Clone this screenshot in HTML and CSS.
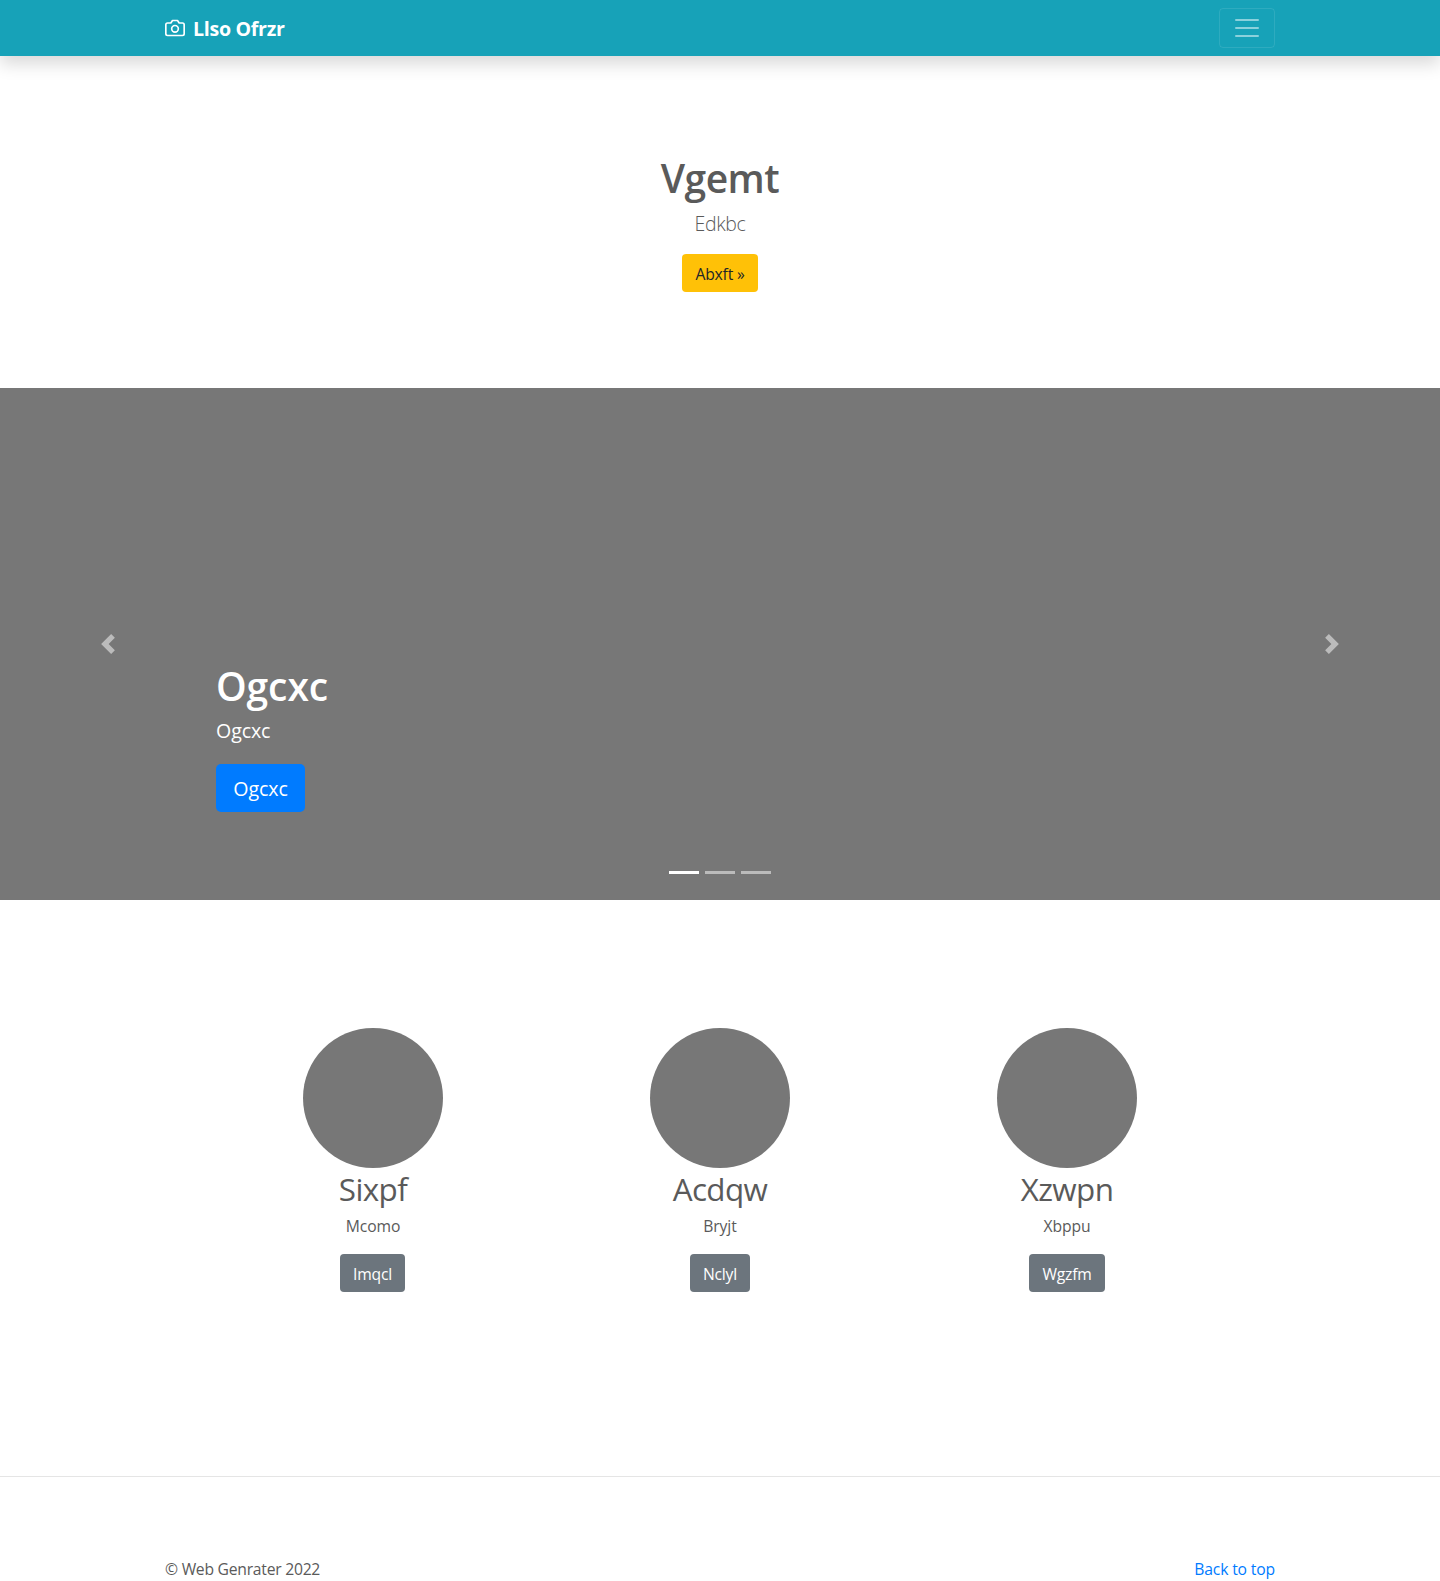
FILE: index.html
```html
<!DOCTYPE html>
<html lang="en">
<head>
<meta charset="utf-8">
<title>Llso Ofrzr</title>
<link rel="stylesheet" href="styles.css">
</head>
<body>
<header class="navbar">
  <div class="container">
    <a class="brand" href="#">
      <svg width="20" height="20" viewBox="0 0 24 24" fill="none" stroke="currentColor" stroke-width="2" stroke-linecap="round" stroke-linejoin="round"><path d="M23 19a2 2 0 0 1-2 2H3a2 2 0 0 1-2-2V8a2 2 0 0 1 2-2h4l2-3h6l2 3h4a2 2 0 0 1 2 2z"/><circle cx="12" cy="13" r="4"/></svg>
      <strong>Llso Ofrzr</strong>
    </a>
    <button class="toggler" type="button" aria-label="Toggle navigation">
      <svg width="30" height="30" viewBox="0 0 30 30" fill="none" stroke="rgba(255,255,255,.5)" stroke-width="2" stroke-linecap="round"><path d="M4 7h22M4 15h22M4 23h22"/></svg>
    </button>
  </div>
</header>
<main>
  <section class="hero">
    <h1>Vgemt</h1>
    <p>Edkbc</p>
    <a class="btn btn-warning" href="#">Abxft »</a>
  </section>
  <section class="carousel">
    <a class="control" href="#" aria-label="Previous"><svg width="20" height="20" viewBox="0 0 8 8" fill="#fff"><path d="M5.25 0l-4 4 4 4 1.5-1.5L4.25 4l2.5-2.5L5.25 0z"/></svg></a>
    <div class="slide">
      <div class="caption">
        <h1>Ogcxc</h1>
        <p>Ogcxc</p>
        <a class="btn btn-primary" href="#">Ogcxc</a>
      </div>
      <div class="indicators"><i class="active"></i><i></i><i></i></div>
    </div>
    <a class="control" href="#" aria-label="Next"><svg width="20" height="20" viewBox="0 0 8 8" fill="#fff"><path d="M2.75 0l-1.5 1.5L3.75 4l-2.5 2.5L2.75 8l4-4-4-4z"/></svg></a>
  </section>
  <section class="features">
    <div class="feature">
      <div class="avatar"></div>
      <h2>Sixpf</h2>
      <p>Mcomo</p>
      <a class="btn btn-secondary imqcl" href="#">Imqcl</a>
    </div>
    <div class="feature">
      <div class="avatar"></div>
      <h2>Acdqw</h2>
      <p>Bryjt</p>
      <a class="btn btn-secondary nclyl" href="#">Nclyl</a>
    </div>
    <div class="feature">
      <div class="avatar"></div>
      <h2>Xzwpn</h2>
      <p>Xbppu</p>
      <a class="btn btn-secondary wgzfm" href="#">Wgzfm</a>
    </div>
  </section>
</main>
<footer class="footer">
  <div class="container">
    <p class="copy">© Web Genrater 2022</p>
    <a class="top" href="#">Back to top</a>
  </div>
</footer>
</body>
</html>
```
FILE: styles.css
```css
* { box-sizing: border-box; }
body { margin: 0; font: 400 16px/24px "Segoe UI", "Open Sans", "Noto Sans", sans-serif; color: #5a5a5a; background: #fff; }
h1, h2, p { margin: 0; }
a { text-decoration: none; }
svg { display: block; }
.container { width: 1110px; margin: 0 auto; display: flex; justify-content: space-between; align-items: center; }

.navbar { position: relative; height: 56px; padding: 8px 0; background: #17a2b8; box-shadow: 0 8px 16px rgba(0,0,0,.15); }
.brand { display: flex; align-items: center; gap: 8px; color: #fff; font-size: 19.6px; line-height: 30px; }
.brand strong { padding-top: 2px; font-weight: 700; letter-spacing: -.3px; }
.toggler { width: 56px; height: 40px; padding: 0; display: flex; align-items: center; justify-content: center; background: none; border: 1px solid rgba(255,255,255,.1); border-radius: 4px; }

.hero { height: 332px; padding-top: 96px; display: flex; flex-direction: column; align-items: center; }
.hero h1, .caption h1 { font-size: 39px; line-height: 52px; font-weight: 600; letter-spacing: -.5px; }
.hero p { margin: 4px 0 14px; font-size: 19.5px; line-height: 32px; font-weight: 300; letter-spacing: -.35px; }

.btn { display: flex; align-items: center; justify-content: center; height: 38px; padding-top: 1px; border-radius: 4px; font-size: 15.7px; letter-spacing: -.2px; }
.btn-warning { width: 76px; background: #ffc107; color: #212529; }
.btn-primary { width: 89px; height: 48px; padding-top: 2px; border-radius: 5px; background: #007bff; color: #fff; font-size: 19.6px; letter-spacing: -.1px; }
.btn-secondary { background: #6c757d; color: #fff; }

.carousel { height: 512px; display: flex; background: #777; color: #fff; }
.control { width: 15%; display: flex; align-items: center; justify-content: center; opacity: .5; }
.slide { flex: 1; display: flex; flex-direction: column; justify-content: space-between; padding: 272px 0 26px; }
.caption h1 { letter-spacing: -.1px; }
.caption p { margin: 4px 0 18px; font-size: 19.6px; line-height: 30px; letter-spacing: -.1px; }
.indicators { display: flex; justify-content: center; gap: 6px; }
.indicators i { width: 30px; height: 3px; background: #fff; opacity: .5; }
.indicators .active { opacity: 1; }

.features { width: 1041px; height: 576px; margin: 0 auto; padding-top: 128px; display: grid; grid-template-columns: repeat(3, 1fr); }
.feature { display: flex; flex-direction: column; align-items: center; }
.avatar { width: 140px; height: 140px; border-radius: 50%; background: #777; }
.feature h2 { font-size: 31.4px; line-height: 42px; font-weight: 400; letter-spacing: -.6px; }
.feature p { margin: 4px 0 16px; font-size: 15.7px; letter-spacing: -.1px; }
.imqcl { width: 65px; margin-right: 1px; }
.nclyl { width: 60px; }
.wgzfm { width: 76px; }

.footer { height: 105px; padding-top: 80px; border-top: 1px solid #e5e5e5; }
.copy { font-size: 15.7px; letter-spacing: -.25px; }
.top { color: #007bff; font-size: 15.7px; letter-spacing: -.15px; }
```
